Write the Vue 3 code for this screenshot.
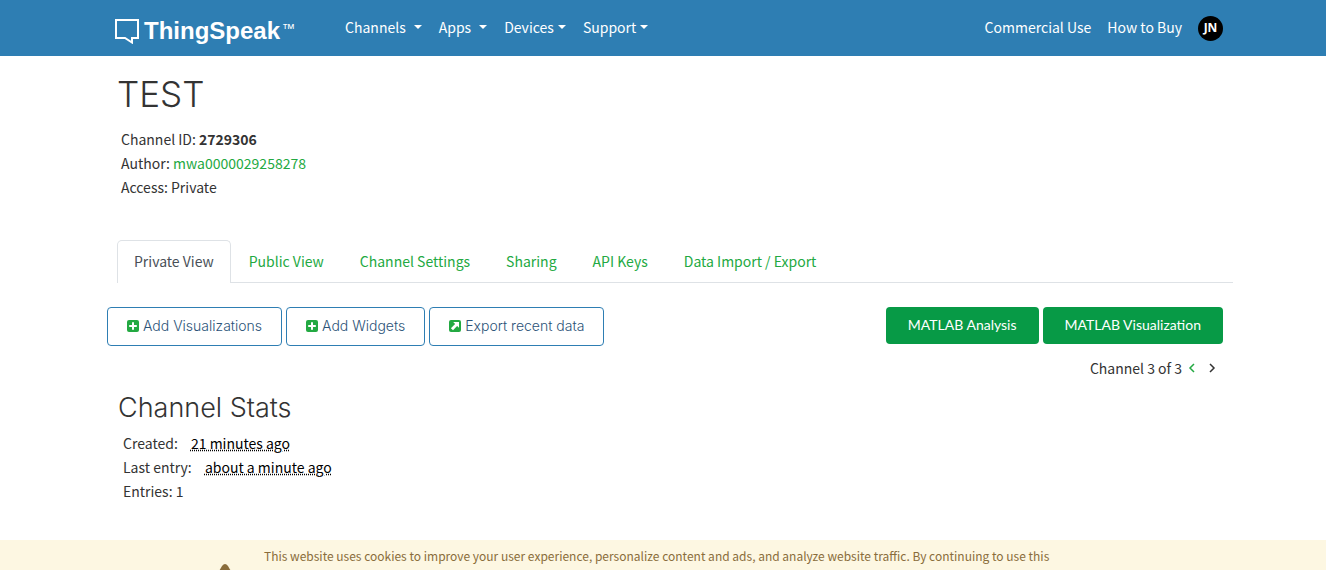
<script setup>
const menus = [
  { label: 'Channels', spaced: true },
  { label: 'Apps', spaced: true },
  { label: 'Devices', spaced: false },
  { label: 'Support', spaced: false },
]
const tabs = ['Private View', 'Public View', 'Channel Settings', 'Sharing', 'API Keys', 'Data Import / Export']
const actions = [
  { label: 'Add Visualizations', icon: 'plus' },
  { label: 'Add Widgets', icon: 'plus' },
  { label: 'Export recent data', icon: 'export' },
]
</script>

<template>
  <div class="page">
    <header class="navbar">
      <div class="container bar">
        <a class="brand" href="#">
          <svg class="bubble" viewBox="0 0 26 26" aria-hidden="true">
            <path d="M2 2H24V20H18V24.500L11 20H2Z" fill="none" stroke="#fff" stroke-width="2" />
          </svg>
          <span>ThingSpeak</span><span class="tm">™</span>
        </a>
        <nav class="menus">
          <button v-for="m in menus" :key="m.label" type="button" class="menu" :class="{ spaced: m.spaced }">
            {{ m.label }}<i class="caret"></i>
          </button>
        </nav>
        <nav class="account">
          <a href="#">Commercial Use</a>
          <a href="#">How to Buy</a>
          <button type="button" class="avatar">JN</button>
        </nav>
      </div>
    </header>

    <main class="container main">
      <h1>TEST</h1>
      <div class="meta">
        <div>Channel ID: <strong>2729306</strong></div>
        <div>Author: <a href="#">mwa0000029258278</a></div>
        <div>Access: Private</div>
      </div>

      <nav class="tabs">
        <a v-for="(t, i) in tabs" :key="t" href="#" :class="{ active: i === 0 }">{{ t }}</a>
      </nav>

      <div class="toolbar">
        <div class="group">
          <button v-for="a in actions" :key="a.label" type="button" class="outline">
            <svg viewBox="0 0 12 12" aria-hidden="true">
              <rect width="12" height="12" rx="2" fill="#23a942" />
              <path v-if="a.icon === 'plus'" d="M6 2.2V9.8M2.2 6H9.8" stroke="#fff" stroke-width="2" />
              <path v-else d="M4.2 2H10V7.8L8.100 6L4 10.200L1.900 8.200L6.100 3.900Z" fill="#fff" />
            </svg>
            <span>{{ a.label }}</span>
          </button>
        </div>
        <div class="group">
          <button type="button" class="solid">MATLAB Analysis</button>
          <button type="button" class="solid">MATLAB Visualization</button>
        </div>
      </div>

      <div class="pager">
        <span>Channel 3 of 3</span>
        <a href="#" aria-label="Previous channel">
          <svg viewBox="0 0 8 10"><path d="M6 1L2 5L6 9" /></svg>
        </a>
        <a href="#" class="next" aria-label="Next channel">
          <svg viewBox="0 0 8 10"><path d="M2 1L6 5L2 9" /></svg>
        </a>
      </div>

      <h2>Channel Stats</h2>
      <div class="stats">
        <div>Created: <abbr>21 minutes ago</abbr></div>
        <div>Last entry: <abbr>about a minute ago</abbr></div>
        <div>Entries: 1</div>
      </div>
    </main>

    <aside class="cookies">
      <div class="container notice">
        <svg viewBox="0 0 48 42" aria-hidden="true">
          <path d="M21 2Q24 -2 27 2L47 37Q48 42 43 42H5Q0 42 1 37Z" fill="#8a6d3b" />
        </svg>
        <p>This website uses cookies to improve your user experience, personalize content and ads, and analyze website traffic. By continuing to use this</p>
      </div>
    </aside>
  </div>
</template>

<style>
body {
  margin: 0;
  background: #fff;
}
</style>

<style scoped>
.page {
  display: flex;
  flex-direction: column;
  min-height: 100vh;
  font: 14px/24px "Noto Sans CJK SC", "Noto Sans", sans-serif;
  color: #333;
}
a {
  color: #23a942;
  text-decoration: none;
}
button {
  font: inherit;
  cursor: pointer;
}
.container {
  box-sizing: border-box;
  width: 100%;
  max-width: 1140px;
  margin: 0 auto;
}
.navbar {
  background: #2e7eb3;
}
.bar {
  display: flex;
  align-items: center;
  height: 56px;
  padding: 0 10px 0 21px;
}
.brand {
  display: flex;
  align-items: center;
  color: #fff;
  font: bold 24px/32px "Liberation Sans", Arial, sans-serif;
  padding-top: 6px;
}
.bubble {
  width: 26px;
  height: 26px;
  margin-right: 4px;
}
.tm {
  align-self: flex-start;
  font-weight: normal;
  font-size: 13px;
  line-height: 28px;
  margin-left: 2px;
}
.menus {
  display: flex;
  gap: 17px;
  margin-left: 50px;
}
.menu {
  display: flex;
  align-items: center;
  padding: 0 0 2px;
  border: 0;
  background: none;
  color: #fff;
}
.caret {
  margin-left: 4px;
  border: 4px solid transparent;
  border-top-color: #fff;
  border-bottom: 0;
}
.spaced .caret {
  margin-left: 8px;
}
.account {
  display: flex;
  align-items: center;
  gap: 16px;
  margin-left: auto;
}
.account a {
  padding-bottom: 2px;
  color: #fff;
}
.avatar {
  width: 25px;
  height: 25px;
  padding: 0;
  border: 0;
  border-radius: 50%;
  background: #000;
  color: #fff;
  font: bold 12px/24px "Open Sans", sans-serif;
}
.main {
  padding: 18px 0 37px 24px;
}
h1,
h2 {
  margin: 0;
  font-family: Inter, sans-serif;
  font-weight: 300;
}
h1 {
  font-size: 35px;
  line-height: 40px;
}
.meta {
  padding: 13px 0 0 4px;
}
.tabs {
  display: flex;
  margin-top: 41px;
  border-bottom: 1px solid #dee2e6;
}
.tabs a {
  padding: 8px 17px 9px;
  border: 1px solid transparent;
  border-bottom: 0;
  border-radius: 5px 5px 0 0;
}
.tabs .active {
  margin-bottom: -1px;
  padding: 8px 16px 10px;
  border-color: #dee2e6;
  background: #fff;
  color: #495057;
}
.toolbar {
  display: flex;
  justify-content: space-between;
  align-items: flex-start;
  margin: 24px 10px 0 -10px;
}
.group {
  display: flex;
  gap: 4px;
}
.outline,
.solid {
  border-radius: 4px;
  font-size: 14px;
  line-height: 21px;
}
.outline {
  display: flex;
  align-items: center;
  gap: 4px;
  padding: 7px 19px 9px;
  border: 1px solid #2e7eb3;
  background: #fff;
  color: #2b5378;
  font-family: Inter, sans-serif;
  font-weight: 300;
}
.outline svg {
  width: 12px;
  height: 12px;
}
.solid {
  padding: 7px 22px 9px;
  border: 0;
  background: #079a46;
  color: #fff;
  font-family: Lato, sans-serif;
}
.pager {
  display: flex;
  justify-content: flex-end;
  align-items: center;
  margin: 10px 17px 0 0;
}
.pager a {
  display: flex;
  margin-left: 6px;
}
.pager .next {
  margin-left: 12px;
}
.pager svg {
  width: 8px;
  height: 10px;
  fill: none;
  stroke: #23a942;
  stroke-width: 1.5;
}
.pager .next svg {
  stroke: #333;
}
h2 {
  margin: 12px 0 0 1px;
  font-size: 27px;
  line-height: 32px;
}
.stats {
  padding: 7px 0 0 6px;
}
.stats abbr {
  margin-left: 10px;
  color: #000;
  text-decoration: underline dotted;
}
.cookies {
  flex: none;
  height: 30px;
  margin-top: auto;
  overflow: hidden;
  background: #fdf7e2;
}
.notice {
  display: flex;
  align-items: flex-start;
  padding-left: 108px;
  color: #8a6d3b;
}
.notice svg {
  flex: none;
  width: 48px;
  height: 42px;
  margin-top: 24px;
}
.notice p {
  margin: 6px 0 0 15px;
  font-size: 12px;
  line-height: 20px;
}
</style>
